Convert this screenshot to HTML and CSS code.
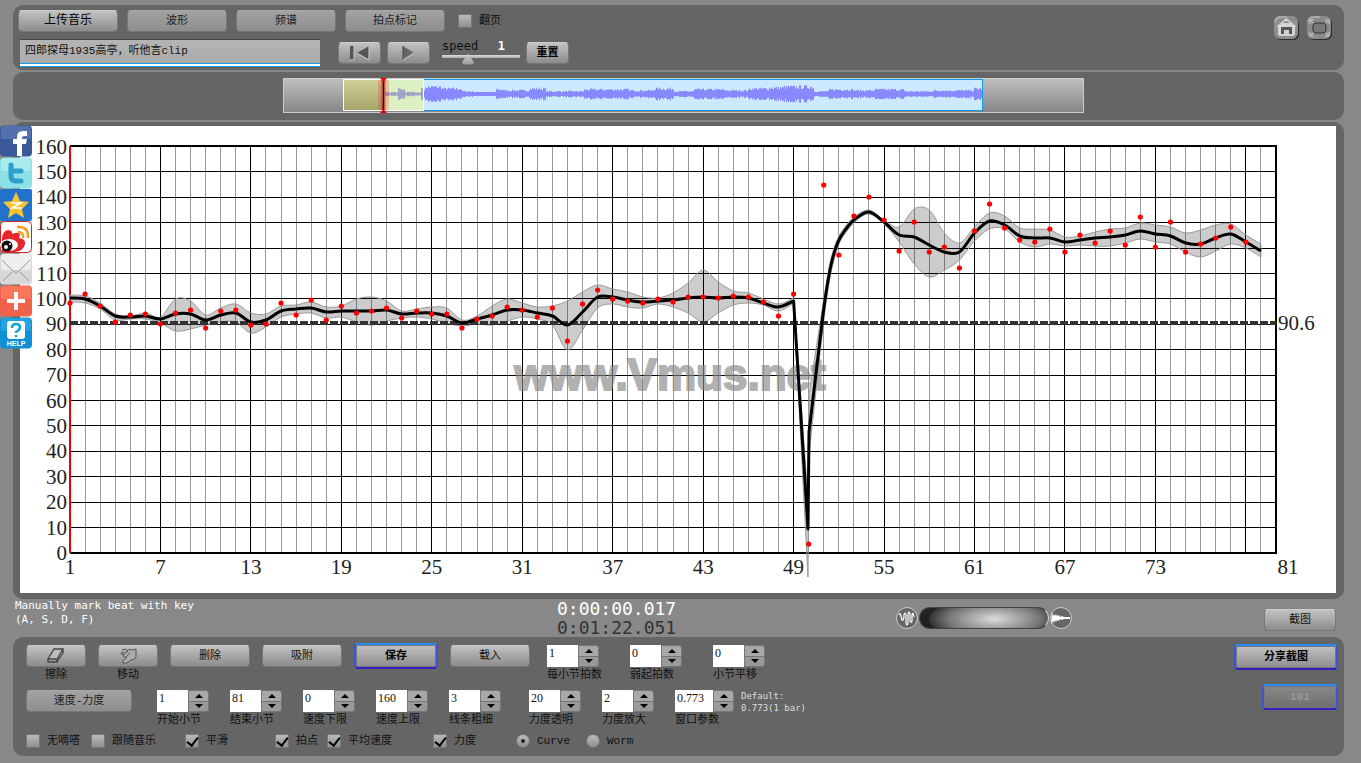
FILE: index.html
```
<!DOCTYPE html>
<html lang="zh-CN">

<head>
    <meta charset="UTF-8">
    <meta name="viewport" content="width=device-width, initial-scale=1.0">
    <title>Vmus.net</title>
    <link rel="stylesheet" href="styles.css">
</head>

<body>
    <header class="panel toolbar">
        <div class="toolbar-left">
            <div class="tabs">
                <button class="btn upload">上传音乐</button>
                <button class="btn flat">波形</button>
                <button class="btn flat">频谱</button>
                <button class="btn flat">拍点标记</button>
                <label class="check page-turn"><input type="checkbox">翻页</label>
            </div>
            <div class="player">
                <input class="song" type="text" value="四郎探母1935高亭，听他言clip" aria-label="song">
                <div class="transport">
                    <button class="btn" aria-label="rewind">
                        <svg width="24" height="18" viewBox="0 0 24 18"><path d="M2 2h4v14H2z" fill="#555"/><path d="M21 2v14L9 9z" fill="#555"/><path d="M2 16h4V2M9 9l12 7V2" fill="none" stroke="#ccc"/></svg>
                    </button>
                    <button class="btn" aria-label="play">
                        <svg width="16" height="18" viewBox="0 0 16 18"><path d="M2 2v14L13 9z" fill="#666"/><path d="M2 2v14" stroke="#444"/><path d="M2 16L13 9" stroke="#ccc"/></svg>
                    </button>
                </div>
                <div class="speed">
                    <div class="speed-head"><label for="speed">speed</label><output for="speed">1</output></div>
                    <input id="speed" type="range" min="0" max="3.3" step="0.1" value="1">
                </div>
                <button class="btn reset">重置</button>
            </div>
        </div>
        <nav class="tools">
            <a href="#" aria-label="home">
                <svg width="27" height="26" viewBox="0 0 27 26"><rect x="2" y="3" width="24" height="22" rx="6" fill="#2b2b2b"/><rect x="1" y="1" width="24" height="23" rx="6" fill="#8e8e8e"/><path d="M2 7q1-5 6-5h6" fill="none" stroke="#aaa" stroke-width="2"/><path d="M13.500 3L4 11l1 2v6q0 2 2 2h13q2 0 2-2v-6l1-2z" fill="#d4d4d4"/><path d="M10 8q3-4 7 0z" fill="#888"/><path d="M8 12h11v7h-3v-4h-5v4H8z" fill="#555"/></svg>
            </a>
            <a href="#" aria-label="fullscreen">
                <svg width="27" height="26" viewBox="0 0 27 26"><rect x="2" y="3" width="24" height="22" rx="6" fill="#2b2b2b"/><rect x="1" y="1" width="24" height="23" rx="6" fill="#8a8a8a"/><path d="M2 7q1-5 6-5h6" fill="none" stroke="#aaa" stroke-width="2"/><path d="M4 9V5h4M4 5l4 4M19 5h4v4M23 5l-4 4M4 17v4h4M4 21l4-4M19 21h4v-4M23 21l-4-4" fill="none" stroke="#ccc"/><rect x="7" y="8" width="13" height="10" rx="3" fill="#777" stroke="#333"/></svg>
            </a>
        </nav>
    </header>

    <section class="panel overview">
        <svg class="wave" viewBox="0 0 801 35">
            <defs>
                <linearGradient id="strip" x2="0" y2="1"><stop offset="0" stop-color="#c0c0c0"/><stop offset="1" stop-color="#858585"/></linearGradient>
                <linearGradient id="olive" x2="0" y2="1"><stop offset="0" stop-color="#cfcf96"/><stop offset="1" stop-color="#a6a56c"/></linearGradient>
            </defs>
            <rect x="0.500" y="0.500" width="800" height="34" fill="url(#strip)" stroke="#ccc"/>
            <rect x="100" y="1.500" width="599.500" height="31" fill="#cceaff" stroke="#1299f0"/>
            <rect x="60.500" y="1.500" width="80" height="31" fill="#dcf0c4" stroke="#fff"/>
            <rect x="61" y="2" width="39" height="30" fill="url(#olive)"/>
            <path id="wave-soft" stroke="#a3a3c8"/>
            <path id="wave-main" stroke="#8888ff"/>
            <rect x="95" y="2" width="11" height="30" fill="#f00" opacity=".18"/>
            <rect x="98" y="2" width="5" height="30" fill="#f00" opacity=".35"/>
            <path d="M100.500 2v31" stroke="#300" stroke-width="1.500"/>
            <path d="M97 0h7l-3.500 4zM97 35h7l-3.500-4z" fill="#e00"/>
        </svg>
    </section>

    <main class="panel chart-panel">
        <svg class="chart" viewBox="20 126 1316 467">
            <g id="grid"></g>
            <text class="watermark" x="670" y="390" text-anchor="middle">www.Vmus.net</text>
            <path id="band" class="band"/>
            <path class="average" d="M70 323H1276"/>
            <path id="curve" class="curve"/>
            <g id="dots" class="dots"></g>
            <text class="axis" x="1278" y="330">90.6</text>
        </svg>
    </main>

    <nav class="share">
        <a href="#" aria-label="Facebook"><svg viewBox="0 0 32 32"><rect y=".5" width="32" height="31" rx="4" fill="#3b5998"/><path d="M1 5q0-4 4-4h22q4 0 4 4v9H1z" fill="#6380ba" opacity=".6"/><path d="M17 31V19h-4v-5h4v-2q0-6 6-6h4v5h-3q-2 0-2 2v1h5l-1 5h-4v12z" fill="#fff"/></svg></a>
        <a href="#" aria-label="Twitter"><svg viewBox="0 0 32 32"><rect y=".5" width="32" height="31" rx="4" fill="#8de0e6"/><path d="M1 5q0-4 4-4h22q4 0 4 4v9H1z" fill="#b4f0ee" opacity=".7"/><path d="M11 8v11q0 5 5 5h5M11 14h10" fill="none" stroke="#2d9fc8" stroke-width="5" stroke-linecap="round" stroke-linejoin="round"/></svg></a>
        <a href="#" aria-label="Qzone"><svg viewBox="0 0 32 32"><rect width="32" height="32" rx="2" fill="#2272cc"/><path d="M16 3l4 9 9 1-7 7 2 9-8-5-8 5 2-9-7-7 9-1z" fill="#fbc52e"/><path d="M11 14h10l-9 5h10" fill="none" stroke="#fff" stroke-width="1.500"/></svg></a>
        <a href="#" aria-label="Weibo"><svg viewBox="0 0 32 32"><rect x=".5" y=".5" width="31" height="31" rx="4" fill="#fff" stroke="#c22"/><path d="M2 17q1-8 7-8 4 1 3 4 8-3 8 1l-1 3q7 1 6 6-1 7-11 8H2z" fill="#e6252c"/><ellipse cx="9" cy="24" rx="9" ry="6" fill="#fff"/><circle cx="7" cy="25" r="5.500" fill="#111"/><circle cx="6" cy="26" r="2" fill="#fff"/><circle cx="10" cy="23" r="1" fill="#fff"/><path d="M17 6q12-1 11 11M18 11q6 0 5 6" fill="none" stroke="#f59a1b" stroke-width="2.500"/></svg></a>
        <a href="#" aria-label="Email"><svg viewBox="0 0 32 32"><rect y=".5" width="32" height="31" rx="4" fill="#d8d8d8"/><path d="M1 5q0-4 4-4h22q4 0 4 4v12H1z" fill="#eee"/><path d="M2 7l11 11q3 3 6 0L30 7M3 28l9-9M29 28l-9-9" fill="none" stroke="#999"/></svg></a>
        <a href="#" aria-label="More"><svg viewBox="0 0 32 32"><rect y=".5" width="32" height="31" rx="4" fill="#f0624a"/><path d="M1 5q0-4 4-4h22q4 0 4 4v9H1z" fill="#ff8466" opacity=".6"/><path d="M16 7v18M7 16h18" stroke="#fff" stroke-width="4"/></svg></a>
        <a href="#" aria-label="Help"><svg viewBox="0 0 32 32"><rect y=".5" width="32" height="31" rx="4" fill="#0f8fd6"/><path d="M1 5q0-4 4-4h22q4 0 4 4v9H1z" fill="#3bb8ec" opacity=".5"/><rect x="7" y="4" width="18" height="18" rx="3" fill="#fff"/><path d="M12 11q0-4 4-4t4 3q0 3-4 5v1M16 18v2" fill="none" stroke="#13a5dd" stroke-width="2.500"/><text class="help" x="16" y="29" text-anchor="middle">HELP</text></svg></a>
    </nav>

    <section class="status">
        <p class="hint">Manually mark beat with key<br>(A, S, D, F)</p>
        <div class="time"><span class="now">0:00:00.017</span><span>0:01:22.051</span></div>
        <div class="status-right">
            <div class="zoomer">
                <svg width="22" height="22" viewBox="0 0 22 22"><circle cx="11" cy="11" r="10.500" fill="#666" stroke="#ccc"/><path d="M3 8q1-3 2 1t1 4q2 1 2-5 1-4 2 0v8q1 4 2 0V7q1-4 2 0v7q2 3 2-1V8q1-4 2 2" fill="none" stroke="#fff" stroke-width="1.200"/></svg>
                <input type="range" aria-label="zoom">
                <svg width="22" height="22" viewBox="0 0 22 22"><circle cx="11" cy="11" r="10.500" fill="#666" stroke="#ccc"/><path d="M2 5l1 4 1-2 1 2 1-2 1 2 2-1 1 2 2-1 2 1h6v2h-6l-2 1-2-1-1 2-2-1-1 2-1-2-1 3-1-2-2 3z" fill="#fff"/></svg>
            </div>
            <button class="btn capture">截图</button>
        </div>
    </section>

    <footer class="panel controls">
        <div class="control-rows">
            <div class="row">
                <div class="icon-btn">
                    <button class="btn" id="erase"><svg width="20" height="18" viewBox="0 0 20 18"><path d="M8 2h9l-6 10H2z" fill="#bbb"/><path d="M8 2h9l-6 10H2zM2 12v3h9v-3M11 15l6-9V2" fill="none" stroke="#444" stroke-width="1.300"/></svg></button>
                    <label for="erase">擦除</label>
                </div>
                <div class="icon-btn">
                    <button class="btn" id="move"><svg width="20" height="18" viewBox="0 0 20 18"><path d="M4 3q5-2 5 1 3-3 5-1l4-1v8q-1 3-5 3l-4 3H5q-2-2 1-3l3-3q-3 1-4-1l1-2Q2 8 3 6l3-1" fill="#aaa" stroke="#555"/><path d="M6 7l4-3M8 10l4-4" stroke="#555"/></svg></button>
                    <label for="move">移动</label>
                </div>
                <button class="btn wide">删除</button>
                <button class="btn wide">吸附</button>
                <button class="btn glow save">保存</button>
                <button class="btn wide">载入</button>
                <div class="steppers beats">
                    <div class="stepper">
                        <div class="field"><input id="per-bar" type="text" value="1"><span><button aria-label="+"></button><button aria-label="-"></button></span></div>
                        <label for="per-bar">每小节拍数</label>
                    </div>
                    <div class="stepper">
                        <div class="field"><input id="pickup" type="text" value="0"><span><button aria-label="+"></button><button aria-label="-"></button></span></div>
                        <label for="pickup">弱起拍数</label>
                    </div>
                    <div class="stepper">
                        <div class="field"><input id="shift" type="text" value="0"><span><button aria-label="+"></button><button aria-label="-"></button></span></div>
                        <label for="shift">小节平移</label>
                    </div>
                </div>
            </div>

            <div class="row second">
                <button class="btn flat mode">速度-力度</button>
                <div class="steppers">
                    <div class="stepper">
                        <div class="field"><input id="from" type="text" value="1"><span><button aria-label="+"></button><button aria-label="-"></button></span></div>
                        <label for="from">开始小节</label>
                    </div>
                    <div class="stepper">
                        <div class="field"><input id="to" type="text" value="81"><span><button aria-label="+"></button><button aria-label="-"></button></span></div>
                        <label for="to">结束小节</label>
                    </div>
                    <div class="stepper">
                        <div class="field"><input id="low" type="text" value="0"><span><button aria-label="+"></button><button aria-label="-"></button></span></div>
                        <label for="low">速度下限</label>
                    </div>
                    <div class="stepper">
                        <div class="field"><input id="high" type="text" value="160"><span><button aria-label="+"></button><button aria-label="-"></button></span></div>
                        <label for="high">速度上限</label>
                    </div>
                    <div class="stepper">
                        <div class="field"><input id="line" type="text" value="3"><span><button aria-label="+"></button><button aria-label="-"></button></span></div>
                        <label for="line">线条粗细</label>
                    </div>
                </div>
                <div class="steppers force">
                    <div class="stepper">
                        <div class="field"><input id="alpha" type="text" value="20"><span><button aria-label="+"></button><button aria-label="-"></button></span></div>
                        <label for="alpha">力度透明</label>
                    </div>
                    <div class="stepper">
                        <div class="field"><input id="scale" type="text" value="2"><span><button aria-label="+"></button><button aria-label="-"></button></span></div>
                        <label for="scale">力度放大</label>
                    </div>
                    <div class="stepper long">
                        <div class="field"><input id="window" type="text" value="0.773"><span><button aria-label="+"></button><button aria-label="-"></button></span></div>
                        <label for="window">窗口参数</label>
                    </div>
                </div>
                <p class="default">Default:<br>0.773(1 bar)</p>
            </div>

            <div class="options">
                <label class="check"><input type="checkbox">无嘀嗒</label>
                <label class="check"><input type="checkbox">跟随音乐</label>
                <label class="check"><input type="checkbox" checked>平滑</label>
                <label class="check"><input type="checkbox" checked>拍点</label>
                <label class="check"><input type="checkbox" checked>平均速度</label>
                <label class="check"><input type="checkbox" checked>力度</label>
                <label class="check"><input type="radio" name="view" checked>Curve</label>
                <label class="check"><input type="radio" name="view">Worm</label>
            </div>
        </div>
        <div class="share-buttons">
            <button class="btn glow">分享截图</button>
            <button class="btn glow small" disabled>101</button>
        </div>
    </footer>

    <script src="chart.js"></script>
</body>

</html>
```
FILE: styles.css
```
* {
    box-sizing: border-box;
}

body {
    position: relative;
    margin: 0;
    padding: 5px 17px 7px 13px;
    background: #888;
    font-family: "Liberation Mono", "Noto Sans CJK SC", monospace;
    font-size: 11px;
    line-height: 14px;
    color: #111;
}

button,
input {
    font: inherit;
    color: inherit;
    margin: 0;
}

p {
    margin: 0;
}

.panel {
    background: #656565;
    border-radius: 10px;
    margin-bottom: 2px;
}

.btn {
    display: flex;
    align-items: center;
    justify-content: center;
    height: 22px;
    padding: 0;
    border: 1px solid #777;
    border-top-color: #ccc;
    border-radius: 4px;
    background: linear-gradient(#c2c2c2, #8c8c8c);
    white-space: nowrap;
}

.flat {
    background: linear-gradient(#a2a2a2, #8e8e8e);
    border-top-color: #aaa;
    color: #222;
}

.glow {
    height: 26px;
    border: 2px solid;
    border-color: #2a8cf0 #3b55dd #3a1fc0;
    box-shadow: inset 0 0 0 1px #777;
    font-weight: bold;
    color: #000;
}

/* 顶部工具栏 */
.toolbar {
    display: flex;
    justify-content: space-between;
    height: 65px;
    padding: 5px 10px 0 5px;
}

.tabs {
    display: flex;
    align-items: center;
    gap: 9px;
}

.tabs .btn {
    width: 100px;
}

.tabs .upload {
    font-size: 12px;
    color: #000;
}

.check {
    display: flex;
    align-items: center;
    gap: 7px;
    white-space: nowrap;
}

.page-turn {
    margin-left: 4px;
}

.check input {
    appearance: none;
    display: flex;
    justify-content: center;
    flex: none;
    width: 14px;
    height: 14px;
    border: 1px solid #777;
    background: linear-gradient(#bbb, #8f8f8f);
}

.check input[type="checkbox"]:checked::after {
    content: "";
    width: 5px;
    height: 9px;
    border: solid #000;
    border-width: 0 2px 2px 0;
    transform: rotate(38deg);
}

.check input[type="radio"] {
    align-items: center;
    border-radius: 50%;
}

.check input[type="radio"]:checked::after {
    content: "";
    width: 4px;
    height: 4px;
    border-radius: 50%;
    background: #222;
}

.player {
    display: flex;
    align-items: center;
    margin: 7px 0 0 2px;
}

.song {
    width: 300px;
    height: 28px;
    padding: 0 5px 8px;
    border: 0;
    border-top: 1px solid #444;
    border-bottom: 1px solid #1a97ee;
    background: linear-gradient(#b4b4b4, #aaa);
    box-shadow: inset 0 -2px #fff, inset 0 -3px #1a97ee;
}

.transport {
    display: flex;
    gap: 6px;
    margin: 0 12px 0 18px;
}

.transport .btn,
.reset {
    width: 43px;
}

.reset {
    font-weight: bold;
    color: #000;
}

.speed {
    width: 78px;
    margin-right: 6px;
    font-family: "DejaVu Sans Mono", monospace;
    font-size: 12px;
}

.speed-head {
    display: flex;
    justify-content: space-between;
    padding-right: 15px;
    line-height: 12px;
}

.speed-head output {
    font-weight: bold;
    color: #fff;
}

#speed {
    appearance: none;
    display: block;
    width: 100%;
    height: 14px;
    background: linear-gradient(#ddd, #aaa) 0 3px / 100% 3px no-repeat;
}

#speed::-webkit-slider-thumb {
    appearance: none;
    width: 12px;
    height: 11px;
    background: linear-gradient(#ccc, #999);
    clip-path: polygon(50% 0, 100% 80%, 90% 100%, 10% 100%, 0 80%);
}

.tools {
    display: flex;
    gap: 6px;
    padding: 5px 1px 0 0;
}

/* 波形总览 */
.overview {
    height: 48px;
    padding: 6px 0 0 10px;
}

.wave {
    display: block;
    width: 100%;
    max-width: 801px;
    margin: 0 auto;
}

/* 速度曲线 */
.chart-panel {
    padding: 4px 8px 6px 7px;
    margin-bottom: 0;
}

.chart {
    display: block;
    width: 100%;
    background: #fff;
}

.axis {
    font-family: "Liberation Serif", serif;
    font-size: 21px;
    fill: #222;
}

.watermark {
    font: bold 44px "Liberation Sans", sans-serif;
    fill: #888;
    stroke: #888;
    stroke-width: 2;
    opacity: .65;
}

.band {
    fill: #000;
    fill-opacity: .2;
    stroke: #999;
}

.average {
    stroke: #333;
    stroke-width: 4;
    stroke-dasharray: 8 2;
}

.curve {
    fill: none;
    stroke: #000;
    stroke-width: 3;
    stroke-linejoin: round;
}

.dots {
    fill: #c00;
    stroke: #f00;
    stroke-width: 2;
}

.share {
    position: absolute;
    left: 0;
    top: 125px;
    width: 32px;
}

.share a,
.share svg {
    display: block;
}

.help {
    font: bold 7px "Liberation Sans", sans-serif;
    fill: #fff;
}

/* 状态行 */
.status {
    display: grid;
    grid-template-columns: 544fr 339fr 448fr;
    height: 38px;
}

.hint {
    padding-left: 2px;
    font-family: "DejaVu Sans Mono", monospace;
    color: #fff;
}

.time {
    display: flex;
    flex-direction: column;
    font: 18px/19px "DejaVu Sans Mono", monospace;
    color: #333;
}

.time .now {
    color: #fff;
}

.status-right {
    display: flex;
    align-items: center;
    justify-content: space-between;
    padding-right: 8px;
}

.zoomer {
    display: flex;
    align-items: center;
    gap: 1px;
}

.zoomer input {
    appearance: none;
    width: 130px;
    height: 22px;
    border: 1px solid #444;
    border-right-color: #ccc;
    border-radius: 11px;
    background: radial-gradient(65px 22px at 58% 55%, #ddd, #777 70%, #333 100%, #222);
}

.zoomer input::-webkit-slider-thumb {
    appearance: none;
}

.capture {
    width: 72px;
    margin-top: 4px;
}

/* 底部控制区 */
.controls {
    display: flex;
    justify-content: space-between;
    margin-bottom: 0;
    padding: 8px 6px 8px 13px;
}

.row {
    display: flex;
    align-items: flex-start;
    gap: 12px;
    height: 45px;
}

.icon-btn {
    display: flex;
    flex-direction: column;
    align-items: center;
    width: 60px;
}

.icon-btn .btn {
    width: 100%;
}

.icon-btn label,
.stepper label {
    display: block;
    margin-top: 1px;
}

.wide {
    width: 80px;
}

.save {
    width: 84px;
    margin-top: -2px;
}

.steppers {
    display: flex;
    gap: 21px;
}

.beats {
    gap: 31px;
    margin-left: 5px;
}

.stepper {
    width: 52px;
    white-space: nowrap;
}

.long {
    width: 59px;
}

.field {
    display: flex;
    height: 22px;
}

.field input {
    flex: 1;
    min-width: 0;
    padding: 0 2px 6px;
    border: 0;
    background: #fff;
    font-family: "Liberation Serif", serif;
    font-size: 12px;
}

.field span {
    display: flex;
    flex-direction: column;
    width: 21px;
}

.field button {
    display: flex;
    align-items: center;
    justify-content: center;
    flex: 1;
    padding: 0;
    border: 1px solid #777;
    border-radius: 0 3px 0 0;
    background: #a8a8a8;
}

.field button + button {
    border-top: 0;
    border-radius: 0 0 3px 0;
    background: #999;
}

.field button::after {
    content: "";
    border: 4px solid transparent;
    border-top: 0;
    border-bottom-color: #000;
}

.field button + button::after {
    border: 4px solid transparent;
    border-bottom: 0;
    border-top-color: #000;
}

.second {
    gap: 0;
    height: 44px;
}

.mode {
    width: 106px;
    margin-right: 25px;
}

.force {
    margin-left: 28px;
}

.default {
    margin-left: 7px;
    font: 9px/12px "DejaVu Sans Mono", monospace;
    color: #ddd;
}

.options {
    display: grid;
    grid-template-columns: 65px 94px 90px 52px 106px 83px 70px auto;
    height: 14px;
}

.share-buttons {
    display: flex;
    flex-direction: column;
    align-items: flex-end;
    gap: 14px;
    margin-top: -1px;
}

.share-buttons .btn {
    width: 104px;
}

.share-buttons .small {
    width: 76px;
    background: linear-gradient(#8a8a8a, #6e6e6e);
    color: #999;
}
```
FILE: chart.js
```
const NS = 'http://www.w3.org/2000/svg'
const left = 70, right = 1276, top0 = 146.5, bottom = 553
const beatX = b => left + (b - 1) * (right - left) / 80
const bpmY = v => bottom - v * (bottom - top0) / 160

// 每拍的纵坐标
const dots = [303, 294, 306, 322, 315, 314, 324, 313, 310, 328, 311, 310, 325, 324, 303, 315, 300, 320, 306, 313,
    311, 308, 318, 311, 314, 314, 328, 319, 316, 307, 310, 317, 308, 341, 304, 290, 299, 301, 303, 299,
    302, 297, 297, 298, 296, 297, 302, 316, 294, 544, 185, 255, 216, 197, 220, 251, 222, 252, 247, 268,
    231, 204, 228, 240, 242, 229, 252, 235, 243, 231, 245, 217, 247, 222, 252, 244, 238, 227, 242]

// 平滑曲线: 1-49 拍, 55-80 拍
const curveA = [298, 299, 306, 316, 317, 316, 319, 314, 314, 320, 315, 313, 322, 320, 311, 309, 308, 312, 311, 311,
    311, 310, 314, 313, 313, 316, 323, 319, 315, 310, 310, 313, 316, 325, 312, 297, 297, 300, 302, 301,
    300, 298, 297, 298, 297, 298, 303, 307, 301]
const curveB = [222, 235, 237, 245, 252, 252, 233, 221, 225, 236, 238, 238, 242, 240, 238, 237, 235, 231, 234, 236,
    243, 244, 238, 234, 242, 251]
const upA = [295, 296, 303, 314, 316, 313, 317, 299, 301, 315, 308, 304, 313, 314, 306, 305, 302, 307, 306, 299,
    297, 301, 311, 309, 307, 308, 320, 316, 306, 299, 303, 307, 306, 301, 292, 285, 289, 292, 297, 298,
    293, 283, 270, 282, 291, 293, 299, 304, 298]
const lowA = [302, 303, 309, 320, 319, 319, 323, 331, 329, 325, 322, 322, 333, 327, 317, 314, 313, 318, 317, 322,
    325, 321, 318, 317, 319, 323, 326, 324, 325, 321, 317, 319, 325, 350, 330, 308, 304, 307, 308, 304,
    307, 313, 322, 313, 305, 303, 305, 311, 303]
const upB = [220, 227, 209, 210, 233, 243, 227, 213, 216, 228, 229, 230, 237, 236, 232, 229, 228, 223, 225, 227,
    233, 230, 225, 224, 235, 244]
const lowB = [224, 242, 264, 277, 270, 260, 241, 229, 229, 242, 247, 244, 246, 245, 246, 246, 243, 239, 242, 244,
    252, 257, 251, 244, 248, 257]
const rise = [[809, 432], [820, 340], [825, 300], [831, 265], [838, 242], [846, 229], [855, 219], [869, 212]]

function points(list, start) {
    return list.map((y, i) => [beatX(start + i), y])
}

// 用贝塞尔曲线连接各点
function smooth(p) {
    let d = `${p[0][0]} ${p[0][1]}`
    for (let i = 0; i < p.length - 1; i++) {
        const a = p[i - 1] || p[i], b = p[i], c = p[i + 1], e = p[i + 2] || c
        d += `C${b[0] + (c[0] - a[0]) / 6} ${b[1] + (c[1] - a[1]) / 6} ${c[0] - (e[0] - b[0]) / 6} ${c[1] - (e[1] - b[1]) / 6} ${c[0]} ${c[1]}`
    }
    return d
}

function add(parent, name, attrs, text) {
    const el = document.createElementNS(NS, name)
    for (const key in attrs) el.setAttribute(key, attrs[key])
    if (text !== undefined) el.textContent = text
    parent.appendChild(el)
}

// 网格和坐标
const grid = document.querySelector('#grid')
for (let b = 2; b <= 80; b++) {
    const major = (b - 1) % 6 === 0
    const x = Math.floor(beatX(b)) + 0.5
    add(grid, 'path', { d: `M${x} ${top0}V${bottom}`, stroke: major ? '#000' : '#999' })
}
for (let v = 0; v <= 160; v += 10) {
    const y = Math.floor(bpmY(v)) + 0.5
    add(grid, 'path', { d: `M${left} ${y}H${right}`, stroke: '#000' })
    add(grid, 'text', { x: 67, y: bpmY(v) + 7, 'text-anchor': 'end', class: 'axis' }, v)
}
add(grid, 'path', { d: `M${left} 146H${right}V${bottom}H${left}`, stroke: '#000', 'stroke-width': 2, fill: 'none' })
add(grid, 'path', { d: `M${left} 146V${bottom}`, stroke: '#e00', 'stroke-width': 2 })
for (let b = 1; b <= 73; b += 6) {
    add(grid, 'text', { x: beatX(b), y: 574, 'text-anchor': 'middle', class: 'axis' }, b)
}
add(grid, 'text', { x: 1288, y: 574, 'text-anchor': 'middle', class: 'axis' }, 81)

// 曲线和力度带
document.querySelector('#curve').setAttribute('d',
    'M' + smooth(points(curveA, 1)) + 'L808 529L' + smooth(rise.concat(points(curveB, 55))))

const upRise = [[809, 395], [819, 330], [824, 298], [830, 263], [837, 240], [845, 227], [854, 217], [869, 210]]
const lowRise = [[809, 455], [821, 345], [826, 303], [832, 268], [839, 244], [847, 231], [856, 221], [869, 214]]
document.querySelector('#band').setAttribute('d',
    'M' + smooth(points(upA, 1)) + 'L808 500L' + smooth(upRise.concat(points(upB, 55))) +
    'L' + smooth(lowRise.concat(points(lowB, 55)).reverse()) + 'L808 577L' + smooth(points(lowA, 1).reverse()) + 'Z')

dots.forEach((y, i) => add(document.querySelector('#dots'), 'circle', { cx: beatX(i + 1), cy: y, r: 1.6 }))

// 波形
const peaks = [[142, 6], [158, 8], [178, 6], [190, 3], [212, 2], [220, 5], [245, 4], [262, 6], [275, 3], [300, 3], [345, 5],
    [370, 4], [390, 6], [410, 3], [440, 5], [465, 4], [485, 6], [500, 7], [530, 8], [545, 3], [570, 5], [590, 4],
    [620, 5], [650, 3], [670, 4], [690, 4], [699, 6]]
let seed = 7
function random() {
    seed = (seed * 16807) % 2147483647
    return seed / 2147483647
}
let main = ''
for (let x = 141; x < 699; x++) {
    const i = peaks.findIndex(p => p[0] >= x)
    const h = Math.max(2, peaks[i][1] * (0.6 + random() * 0.5))
    main += `M${x + 0.5} ${16 - h}v${h * 2}`
}
let soft = ''
for (let x = 102; x < 140; x++) {
    const h = x > 114 && x < 122 ? 3 + random() * 3 : x > 137 ? 6 : 1 + random() * 1.5
    soft += `M${x + 0.5} ${16 - h}v${h * 2}`
}
document.querySelector('#wave-main').setAttribute('d', main)
document.querySelector('#wave-soft').setAttribute('d', soft)
```
